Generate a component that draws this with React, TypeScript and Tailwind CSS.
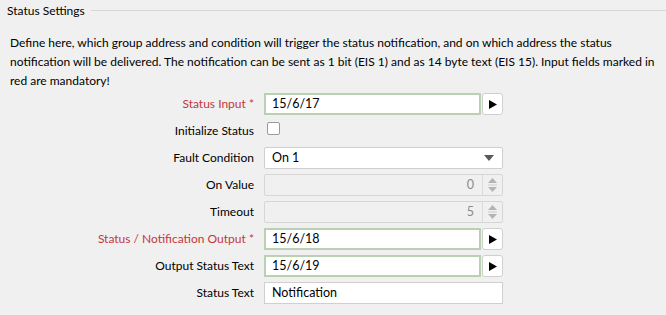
import React from "react";

const FONT = "font-['Lato',sans-serif]";

function Arrow() {
  return (
    <button className="w-[21px] h-[22px] ml-px bg-white border border-[#cfcfcf] rounded-[3px] flex items-center justify-center">
      <svg width="8" height="9" viewBox="0 0 8 9">
        <path d="M0 0 L8 4.5 L0 9 Z" fill="#000" />
      </svg>
    </button>
  );
}

function Spinner() {
  return (
    <div className="w-[20px] h-full border-l border-[#dadada] flex items-center justify-center">
      <svg width="9" height="14" viewBox="0 0 9 14">
        <path d="M4.5 0 L9 5 L0 5 Z" fill="#b4b4b4" />
        <rect x="0" y="6.5" width="9" height="1" fill="#cdcdcd" />
        <path d="M0 9 L9 9 L4.5 14 Z" fill="#b4b4b4" />
      </svg>
    </div>
  );
}

function Row({ label, req, children }: { label: string; req?: boolean; children: React.ReactNode }) {
  return (
    <div className="flex h-[22px] items-center">
      <div className={`w-[255px] text-right pr-px ${req ? "text-[#c4373d]" : "text-black"}`}>
        {label}
        {req ? " *" : ""}
      </div>
      <div className="ml-[9px] w-[239px] h-full flex">{children}</div>
    </div>
  );
}

function AddressInput({ value }: { value: string }) {
  return (
    <>
      <div className="w-[218px] h-full bg-white border-2 border-[#b9d0b3] flex items-center pl-[6px] text-[12.5px]">
        {value}
      </div>
      <Arrow />
    </>
  );
}

export default function App() {
  return (
    <div className={`w-[666px] h-[315px] bg-[#f0f0f0] overflow-hidden text-[12px] text-black ${FONT}`}>
      {/* Group header */}
      <div className="flex items-center h-[21px] pl-[7px]">
        <span>Status Settings</span>
        <div className="flex-1 h-px bg-[#d7d7d7] ml-[6px]" />
      </div>

      <p className="px-[10px] pt-[12px] leading-[19px] whitespace-nowrap">
        Define here, which group address and condition will trigger the status notification, and on which address the status
        <br />
        notification will be delivered. The notification can be sent as 1 bit (EIS 1) and as 14 byte text (EIS 15). Input fields marked in
        <br />
        red are mandatory!
      </p>

      <div className="mt-[3px] flex flex-col gap-[5px]">
        <Row label="Status Input" req>
          <AddressInput value="15/6/17" />
        </Row>
        <Row label="Initialize Status">
          <div className="w-[13px] h-[13px] mt-[2px] ml-[3px] bg-white border border-[#9a9a9a] rounded-[2px]" />
        </Row>
        <Row label="Fault Condition">
          <div className="w-full h-full bg-white border border-[#cfcfcf] rounded-[2px] flex items-center justify-between pl-[7px] pr-[8px] text-[12.5px]">
            <span>On 1</span>
            <svg width="10" height="6" viewBox="0 0 10 6">
              <path d="M0 0 L10 0 L5 6 Z" fill="#5a5a5a" />
            </svg>
          </div>
        </Row>
        <Row label="On Value">
          <div className="w-full h-full border border-[#d6d6d6] rounded-[2px] flex items-center text-[#8c8c8c] text-[12.5px]">
            <span className="flex-1 text-right pr-[8px]">0</span>
            <Spinner />
          </div>
        </Row>
        <Row label="Timeout">
          <div className="w-full h-full border border-[#d6d6d6] rounded-[2px] flex items-center text-[#8c8c8c] text-[12.5px]">
            <span className="flex-1 text-right pr-[8px]">5</span>
            <Spinner />
          </div>
        </Row>
        <Row label="Status / Notification Output" req>
          <AddressInput value="15/6/18" />
        </Row>
        <Row label="Output Status Text">
          <AddressInput value="15/6/19" />
        </Row>
        <Row label="Status Text">
          <div className="w-full h-full bg-white border border-[#cfcfcf] flex items-center pl-[7px] text-[12.5px]">
            Notification
          </div>
        </Row>
      </div>
    </div>
  );
}
